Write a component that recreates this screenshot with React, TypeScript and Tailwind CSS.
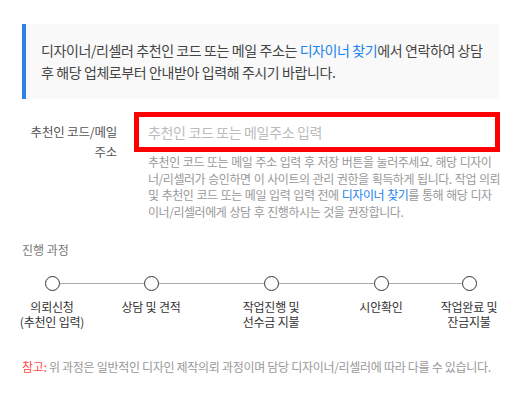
import React from "react";

const steps = [
  { w: "w-[60px]", lines: ["의뢰신청", "(추천인 입력)"] },
  { w: "w-[138px]", lines: ["상담 및 견적"] },
  { w: "w-[102px]", lines: ["작업진행 및", "선수금 지불"] },
  { w: "w-[118px]", lines: ["시안확인"] },
  { w: "w-[58px]", lines: ["작업완료 및", "잔금지불"] },
];

export default function App() {
  return (
    <div className="w-[520px] h-[400px] bg-white pt-[24px] pl-[22px] pr-[21px] font-['Noto_Sans_CJK_KR',sans-serif]">
      {/* 안내 박스 */}
      <div className="border-l-4 border-[#2f80e4] bg-[#f9f9f9] pl-[15px] pr-[8px] pt-[15px] pb-[16px] text-[14px] leading-[22px] tracking-[-0.4px] text-[#444]">
        디자이너/리셀러 추천인 코드 또는 메일 주소는{" "}
        <span className="text-[#1a82f0]">디자이너 찾기</span>에서 연락하여 상담 후 해당 업체로부터 안내받아 입력해 주시기 바랍니다.
      </div>

      {/* 추천인 입력 */}
      <div className="mt-[13px] flex">
        <label className="w-[95px] shrink-0 pt-[10px] text-right text-[12.5px] leading-[20px] tracking-[-0.2px] text-[#555] break-keep">
          추천인 코드/메일 주소
        </label>
        <div className="ml-[17px] flex-1">
          <input
            className="block w-full h-[40px] border-[5px] border-[#ff0000] bg-white px-[9px] text-[14px] tracking-[-0.35px] outline-none placeholder:text-[#bbb]"
            placeholder="추천인 코드 또는 메일주소 입력"
          />
          <div className="mt-[2px] pl-[14px] text-[12px] leading-[16.7px] tracking-[-0.45px] [word-spacing:0.8px] text-[#999] whitespace-nowrap">
            <div>추천인 코드 또는 메일 주소 입력 후 저장 버튼을 눌러주세요. 해당 디자이</div>
            <div>너/리셀러가 승인하면 이 사이트의 관리 권한을 획득하게 됩니다. 작업 의뢰</div>
            <div>
              및 추천인 코드 또는 메일 입력 입력 전에 <span className="text-[#1a82f0]">디자이너 찾기</span>를 통해 해당 디자
            </div>
            <div>이너/리셀러에게 상담 후 진행하시는 것을 권장합니다.</div>
          </div>
        </div>
      </div>

      {/* 진행 과정 */}
      <div className="mt-[19px] text-[12px] leading-[20px] text-[#777]">진행 과정</div>

      <div className="relative mt-[16px] flex">
        <div className="absolute left-[30px] top-[7px] h-px w-[417px] bg-[#aaa]" />
        {steps.map((s, i) => (
          <div key={i} className={`${s.w} relative flex flex-col items-center`}>
            <div className="h-[15px] w-[15px] rounded-full border-[1.5px] border-[#333] bg-white" />
            <div className="mt-[8px] whitespace-nowrap text-center text-[12px] leading-[15px] tracking-[-0.2px] text-[#333]">
              {s.lines.map((l, j) => (
                <div key={j}>{l}</div>
              ))}
            </div>
          </div>
        ))}
      </div>

      {/* 참고 */}
      <p className="mt-[29px] text-[12px] leading-[17px] tracking-[-0.3px] text-[#999]">
        <span className="text-[#ff4b4b]">참고:</span> 위 과정은 일반적인 디자인 제작의뢰 과정이며 담당 디자이너/리셀러에 따라 다를 수 있습니다.
      </p>
    </div>
  );
}
